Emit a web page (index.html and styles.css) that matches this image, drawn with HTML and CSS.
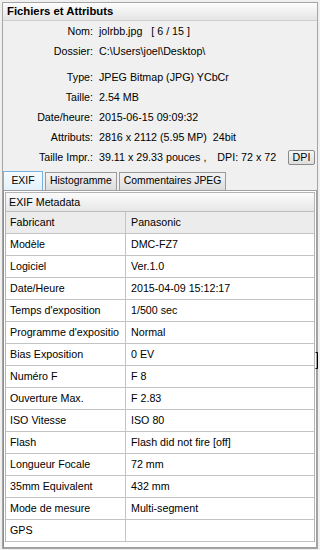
FILE: index.html
```html
<!DOCTYPE html>
<html>
<head>
<meta charset="utf-8">
<link rel="stylesheet" href="styles.css">
</head>
<body>
<div class="group">
  <div class="title">Fichiers et Attributs</div>
  <div class="info">
    <div class="row"><span class="lbl">Nom:</span><span class="val">jolrbb.jpg&nbsp;&nbsp;&nbsp;[ 6 / 15 ]</span></div>
    <div class="row"><span class="lbl">Dossier:</span><span class="val">C:\Users\joel\Desktop\</span></div>
    <div class="row gap"><span class="lbl">Type:</span><span class="val">JPEG Bitmap (JPG) YCbCr</span></div>
    <div class="row"><span class="lbl">Taille:</span><span class="val">2.54 MB</span></div>
    <div class="row"><span class="lbl">Date/heure:</span><span class="val">2015-06-15 09:09:32</span></div>
    <div class="row"><span class="lbl">Attributs:</span><span class="val">2816 x 2112 (5.95 MP)&nbsp;&nbsp;24bit</span></div>
    <div class="row"><span class="lbl">Taille Impr.:</span><span class="val">39.11 x 29.33 pouces ,<span class="dpi">DPI: 72 x 72</span></span><span class="btn">DPI</span></div>
  </div>
  <div class="tabs">
    <div class="tab active">EXIF</div>
    <div class="tab">Histogramme</div>
    <div class="tab">Commentaires JPEG</div>
  </div>
  <div class="panel">
    <div class="tbl">
      <div class="thead">EXIF Metadata</div>
      <div class="tr sel"><div class="k">Fabricant</div><div class="v">Panasonic</div></div>
      <div class="tr"><div class="k">Modèle</div><div class="v">DMC-FZ7</div></div>
      <div class="tr"><div class="k">Logiciel</div><div class="v">Ver.1.0</div></div>
      <div class="tr"><div class="k">Date/Heure</div><div class="v">2015-04-09 15:12:17</div></div>
      <div class="tr"><div class="k">Temps d'exposition</div><div class="v">1/500 sec</div></div>
      <div class="tr"><div class="k">Programme d'expositio</div><div class="v">Normal</div></div>
      <div class="tr"><div class="k">Bias Exposition</div><div class="v">0 EV</div></div>
      <div class="tr"><div class="k">Numéro F</div><div class="v">F 8</div></div>
      <div class="tr"><div class="k">Ouverture Max.</div><div class="v">F 2.83</div></div>
      <div class="tr"><div class="k">ISO Vitesse</div><div class="v">ISO 80</div></div>
      <div class="tr"><div class="k">Flash</div><div class="v">Flash did not fire [off]</div></div>
      <div class="tr"><div class="k">Longueur Focale</div><div class="v">72 mm</div></div>
      <div class="tr"><div class="k">35mm Equivalent</div><div class="v">432 mm</div></div>
      <div class="tr"><div class="k">Mode de mesure</div><div class="v">Multi-segment</div></div>
      <div class="tr"><div class="k">GPS</div><div class="v"></div></div>
    </div>
  </div>
</div>
<svg class="cursor" width="5" height="17" viewBox="0 0 5 17"><path d="M0.5 0.5H2.5V16.5H0.5" fill="none" stroke="#000" stroke-width="1"/></svg>
</body>
</html>
```
FILE: styles.css
```css
* { box-sizing: border-box; }
html, body { margin: 0; padding: 0; }
body {
  width: 320px;
  height: 550px;
  background: #f0f0f0;
  font-family: "Liberation Sans", Arial, sans-serif;
  font-size: 10.7px;
  color: #000;
  position: relative;
  overflow: hidden;
}
.group {
  margin: 2px 2px 0 2px;
  height: 547px;
  border: 1px solid #a5a5a5;
  display: flex;
  flex-direction: column;
}
.title {
  height: 18px;
  line-height: 17px;
  padding-left: 4px;
  font-weight: bold;
  font-size: 11.3px;
  background: linear-gradient(#fdfdfd, #e4e4e4);
  border-bottom: 1px solid #cfcfcf;
}
.info {
  display: flex;
  flex-direction: column;
}
.row {
  display: flex;
  height: 20px;
  line-height: 20px;
  align-items: center;
}
.row.gap { margin-top: 6px; }
.lbl {
  width: 90px;
  text-align: right;
  flex: none;
}
.val {
  margin-left: 6px;
  white-space: nowrap;
}
.dpi { margin-left: 11px; }
.btn {
  margin-left: auto;
  margin-right: 2px;
  width: 27px;
  height: 15px;
  line-height: 13px;
  text-align: center;
  border: 1px solid #8a8a8a;
  border-radius: 2px;
  background: linear-gradient(#f6f6f6, #dedede);
}
.tabs {
  display: flex;
  align-items: flex-end;
  gap: 2px;
  margin-top: 4px;
  height: 19px;
}
.tab {
  height: 18px;
  line-height: 16px;
  padding: 0 4px;
  font-size: 10.4px;
  border: 1px solid #9a9a9a;
  border-bottom: none;
  background: linear-gradient(#f4f4f4, #dcdcdc);
}
.tab.active {
  height: 19px;
  width: 40px;
  padding: 0;
  text-align: center;
  line-height: 18px;
  border: 1px solid #7ab2de;
  border-bottom: none;
  background: linear-gradient(#f6fbfe, #e3f1fb);
}
.panel {
  flex: 1;
  border: 1px solid #a0a0a0;
  border-left-color: #8c8c8c;
  background: #ffffff;
  padding: 1px;
}
.tbl {
  border: 1px solid #b4b4b4;
  border-bottom: none;
}
.thead {
  height: 19px;
  line-height: 18px;
  padding-left: 3px;
  background: linear-gradient(#fbfbfb, #e7e7e7);
  border-bottom: 1px solid #bdbdbd;
}
.tr {
  display: flex;
  height: 22px;
  border-bottom: 1px solid #c3c3c3;
}
.tr.sel { background: #ececec; }
.k {
  width: 120px;
  flex: none;
  padding-left: 4px;
  line-height: 21px;
  border-right: 1px solid #c3c3c3;
  white-space: nowrap;
  overflow: hidden;
}
.v {
  flex: 1;
  padding-left: 5px;
  line-height: 21px;
  white-space: nowrap;
}
.cursor {
  position: absolute;
  left: 315px;
  top: 352px;
}
```
